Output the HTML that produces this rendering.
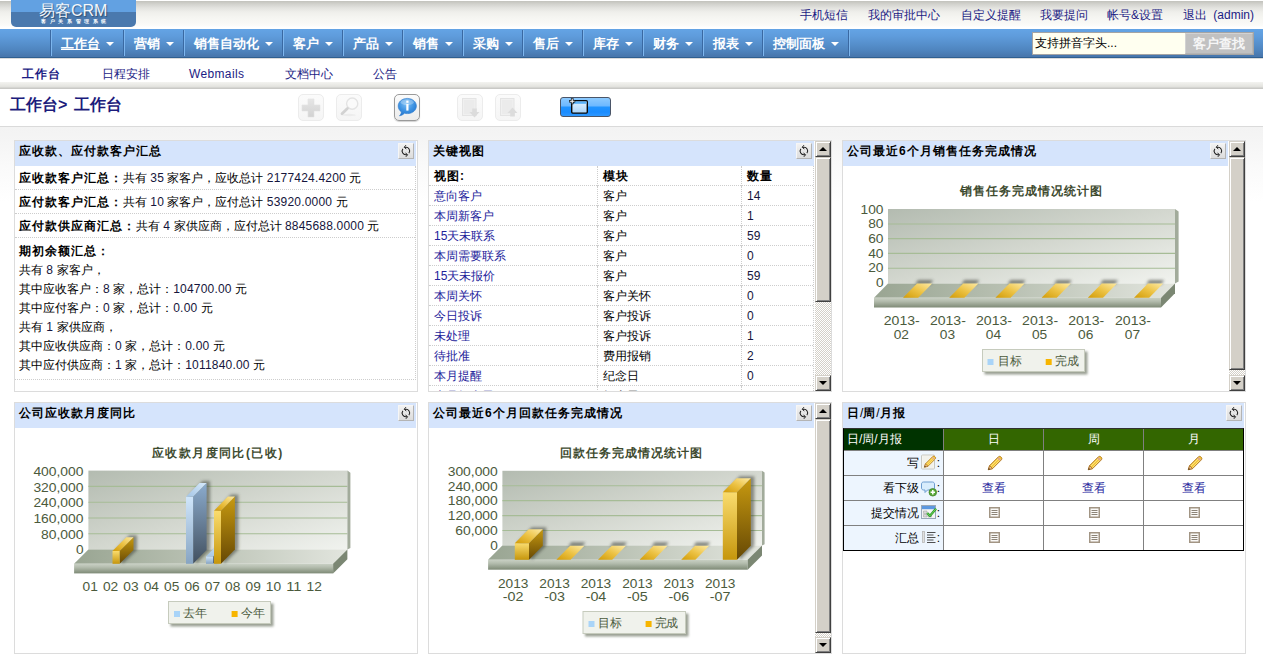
<!DOCTYPE html><html><head><meta charset="utf-8"><title>易客CRM</title><style>
*{box-sizing:border-box}
html,body{margin:0;padding:0}
body{width:1263px;height:658px;overflow:hidden;background:#fff;font-family:"Liberation Sans",sans-serif;font-size:12px;color:#000;position:relative;line-height:14px}
.abs{position:absolute}
b,.b{font-weight:bold;letter-spacing:1px}
.c{display:inline-block;width:1em;text-align:center;font-style:normal;letter-spacing:0;text-decoration:inherit;white-space:nowrap;overflow:visible}
b .c,.b .c{width:calc(1em + 1px);text-align:left}
.nb .c{width:1em;text-align:center}
#logo .t2 .c{width:8.6px}
#topbar{left:0;top:0;width:1263px;height:29px;background:linear-gradient(to bottom,#ffffff 0px,#ffffff 1px,#c2c2bc 1px,#d2d2cd 4px,#e3e3df 8px,#efefeb 12px,#f5f5f1 17px,#f9f9f6 23px,#fcfcfa 26px,#ffffff 27px,#ffffff 29px)}
#logo{left:11px;top:0;width:125px;height:27px;border-radius:0 0 5px 5px;background:linear-gradient(to bottom,#62a1e2 0,#62a1e2 12px,#4a79ae 12px,#4a79ae 27px);overflow:hidden}
#logo .t1{position:absolute;left:28px;top:1px;color:rgba(255,255,255,.94);font-size:16px;line-height:19px;letter-spacing:0px;white-space:nowrap;text-shadow:1px 1px 1px rgba(0,0,0,.35)}
#logo .t2{position:absolute;left:28.5px;top:17.5px;color:#fff;font-size:5px;line-height:6px;letter-spacing:3.7px;white-space:nowrap;font-weight:bold}
.tl{position:absolute;top:8px;color:#1c1c84;white-space:nowrap;line-height:14px}
#nav{left:0;top:29px;width:1263px;height:30px;background:linear-gradient(to bottom,#64a4e5 0,#5f9cdc 7px,#5791ce 14px,#4f85bf 21px,#4877ad 27px,#4877ad 28px,#2f5f90 28px,#2f5f90 29px,#cdcdcd 29px,#e8e8e8 30px)}
.sep{position:absolute;top:1px;width:2px;height:26px;border-left:1px solid #3a69a2;border-right:1px solid #7db6ee}
.ni{position:absolute;top:0;height:28px;line-height:30px;color:#fff;font-weight:bold;font-size:13px;white-space:nowrap}
.arr{position:absolute;top:13px;width:0;height:0;border-left:4px solid transparent;border-right:4px solid transparent;border-top:4.5px solid #fff}
#srch{left:1032px;top:32px;width:222px;height:23px;border:1px solid #a4a4a4;background:#fffff0}
#srch .in{position:absolute;left:0;top:0;width:152px;height:21px;background:#fffff0;padding:0 0 0 2px;line-height:21px;color:#000;white-space:nowrap}
#sbtn{position:absolute;left:152px;top:0;width:68px;height:21px;background:#c1c1c1;border:1px solid #d2d2d2;border-right-color:#b4b4b4;border-bottom-color:#b4b4b4;color:#f6f6f6;font-weight:bold;font-size:13px;line-height:19px;text-align:center;letter-spacing:0px}
.sn{position:absolute;top:67px;color:#1c1c84;white-space:nowrap;line-height:14px}
#band{left:0;top:82px;width:1263px;height:7px;background:linear-gradient(to bottom,#f3f3f0 0,#e9e9e5 3px,#e1e1dd 5px,#c9c9c6 6px,#c9c9c6 7px)}
#crumb{left:10px;top:95px;font-size:16px;line-height:20px;color:#1c1c7c;white-space:nowrap;font-weight:bold;letter-spacing:0;word-spacing:2.5px}
#line{left:0;top:126px;width:1263px;height:1px;background:#dadada}
#bg{left:0;top:127px;width:1263px;height:531px;background:linear-gradient(to bottom,#f3f3f3 0,#f5f5f5 14px,#fafafa 40px,#ffffff 75px)}
.panel{position:absolute;width:404px;height:252px;border:1px solid #dcdcdc;background:#fff;overflow:hidden}
.ph{position:absolute;left:0;top:0;height:25px;background:#d5e4fc}
.pt{position:absolute;left:4px;top:3px;white-space:nowrap;line-height:14px}
.rf{position:absolute;top:2px;width:16px;height:16px;background:linear-gradient(to bottom,#f2f2f2,#dcdcdc);border:1px solid;border-color:#f6f6f6 #b4b4b4 #b4b4b4 #f6f6f6}
.sb{position:absolute;top:0;width:16px;height:250px;background:#ebe9e4;background-image:linear-gradient(45deg,#d4d0c8 25%,transparent 25%,transparent 75%,#d4d0c8 75%),linear-gradient(45deg,#d4d0c8 25%,#fff 25%,#fff 75%,#d4d0c8 75%);background-size:2px 2px;background-position:0 0,1px 1px}
.sbb{position:absolute;left:0;width:16px;background:#d4d0c8;border:1px solid;border-color:#d4d0c8 #404040 #404040 #d4d0c8;box-shadow:inset 1px 1px 0 #fff,inset -1px -1px 0 #808080}
.tri-u{position:absolute;left:2.5px;top:5px;width:0;height:0;border-left:4px solid transparent;border-right:4px solid transparent;border-bottom:4px solid #000}
.tri-d{position:absolute;left:2.5px;top:6px;width:0;height:0;border-left:4px solid transparent;border-right:4px solid transparent;border-top:4px solid #000}
.num{color:#15153c;letter-spacing:0.2px}
a,.lk{color:#22229a;text-decoration:none}
</style></head><body><div id="topbar" class="abs"></div><div id="logo" class="abs"><div class="t1"><i class="c">易</i><i class="c">客</i>CRM</div><div class="t2"><i class="c">客</i><i class="c">户</i><i class="c">关</i><i class="c">系</i><i class="c">管</i><i class="c">理</i><i class="c">系</i><i class="c">统</i></div></div><div class="tl" style="left:800px"><i class="c">手</i><i class="c">机</i><i class="c">短</i><i class="c">信</i></div><div class="tl" style="left:867.5px"><i class="c">我</i><i class="c">的</i><i class="c">审</i><i class="c">批</i><i class="c">中</i><i class="c">心</i></div><div class="tl" style="left:960.5px"><i class="c">自</i><i class="c">定</i><i class="c">义</i><i class="c">提</i><i class="c">醒</i></div><div class="tl" style="left:1040px"><i class="c">我</i><i class="c">要</i><i class="c">提</i><i class="c">问</i></div><div class="tl" style="left:1107px"><i class="c">帐</i><i class="c">号</i>&amp;<i class="c">设</i><i class="c">置</i></div><div class="tl" style="left:1183px"><i class="c">退</i><i class="c">出</i><span style="margin-left:3px"> </span>(admin)</div><div id="nav" class="abs"><div class="sep" style="left:50px"></div><div class="ni" style="left:61px;text-decoration:underline;"><i class="c">工</i><i class="c">作</i><i class="c">台</i></div><div class="arr" style="left:105.5px"></div><div class="sep" style="left:123px"></div><div class="ni" style="left:134px;"><i class="c">营</i><i class="c">销</i></div><div class="arr" style="left:165.5px"></div><div class="sep" style="left:183px"></div><div class="ni" style="left:194px;"><i class="c">销</i><i class="c">售</i><i class="c">自</i><i class="c">动</i><i class="c">化</i></div><div class="arr" style="left:264.5px"></div><div class="sep" style="left:282px"></div><div class="ni" style="left:293px;"><i class="c">客</i><i class="c">户</i></div><div class="arr" style="left:324.5px"></div><div class="sep" style="left:342px"></div><div class="ni" style="left:353px;"><i class="c">产</i><i class="c">品</i></div><div class="arr" style="left:384.5px"></div><div class="sep" style="left:402px"></div><div class="ni" style="left:413px;"><i class="c">销</i><i class="c">售</i></div><div class="arr" style="left:444.5px"></div><div class="sep" style="left:462px"></div><div class="ni" style="left:473px;"><i class="c">采</i><i class="c">购</i></div><div class="arr" style="left:504.5px"></div><div class="sep" style="left:522px"></div><div class="ni" style="left:533px;"><i class="c">售</i><i class="c">后</i></div><div class="arr" style="left:564.5px"></div><div class="sep" style="left:582px"></div><div class="ni" style="left:593px;"><i class="c">库</i><i class="c">存</i></div><div class="arr" style="left:624.5px"></div><div class="sep" style="left:642px"></div><div class="ni" style="left:653px;"><i class="c">财</i><i class="c">务</i></div><div class="arr" style="left:684.5px"></div><div class="sep" style="left:702px"></div><div class="ni" style="left:713px;"><i class="c">报</i><i class="c">表</i></div><div class="arr" style="left:744.5px"></div><div class="sep" style="left:762px"></div><div class="ni" style="left:773px;"><i class="c">控</i><i class="c">制</i><i class="c">面</i><i class="c">板</i></div><div class="arr" style="left:830.5px"></div><div class="sep" style="left:848px"></div></div><div id="srch" class="abs"><div class="in"><i class="c">支</i><i class="c">持</i><i class="c">拼</i><i class="c">音</i><i class="c">字</i><i class="c">头</i>...</div><div id="sbtn"><i class="c">客</i><i class="c">户</i><i class="c">查</i><i class="c">找</i></div></div><div class="sn b" style="left:22px"><i class="c">工</i><i class="c">作</i><i class="c">台</i></div><div class="sn" style="left:101.5px"><i class="c">日</i><i class="c">程</i><i class="c">安</i><i class="c">排</i></div><div class="sn" style="left:189px"><span style="letter-spacing:0.35px">Webmails</span></div><div class="sn" style="left:284.5px"><i class="c">文</i><i class="c">档</i><i class="c">中</i><i class="c">心</i></div><div class="sn" style="left:372.5px"><i class="c">公</i><i class="c">告</i></div><div id="band" class="abs"></div><div id="crumb" class="abs"><i class="c">工</i><i class="c">作</i><i class="c">台</i>&gt; <i class="c">工</i><i class="c">作</i><i class="c">台</i></div><div class="abs" style="left:298px;top:94px;width:26px;height:27px;border:1px solid #ececec;border-radius:5px;background:linear-gradient(to bottom,#fbfbfb,#f5f5f5)"></div><svg class="abs" style="left:298px;top:94px" width="26" height="27" viewBox="0 0 26 27"><defs><linearGradient id="gpl" x1="0" y1="0" x2="0" y2="1"><stop offset="0" stop-color="#e6e6e6"/><stop offset="1" stop-color="#d2d2d2"/></linearGradient></defs><path d="M10 5 h6 v6 h6 v6 h-6 v6 h-6 v-6 h-6 v-6 h6 z" fill="url(#gpl)" stroke="#e2e2e2" stroke-width="0.6" stroke-linejoin="round"/></svg><div class="abs" style="left:336px;top:94px;width:26px;height:27px;border:1px solid #ececec;border-radius:5px;background:linear-gradient(to bottom,#fbfbfb,#f5f5f5)"></div><svg class="abs" style="left:336px;top:94px" width="26" height="27" viewBox="0 0 26 27"><ellipse cx="13" cy="21" rx="7" ry="1.2" fill="#ececec"/><circle cx="16.2" cy="9.6" r="5.6" fill="#fafafa" stroke="#e3e3e3" stroke-width="1.4"/><path d="M11.4 14.4 L6 19.8" stroke="#d2d2d2" stroke-width="2.8" stroke-linecap="round"/></svg><div class="abs" style="left:394px;top:94px;width:26px;height:27px;border:1px solid #9a9a9a;border-radius:5px;background:linear-gradient(to bottom,#fbfbfb,#ececec);box-shadow:0 1px 1px rgba(0,0,0,.18)"></div><svg class="abs" style="left:394px;top:94px" width="26" height="27" viewBox="0 0 26 27"><defs><radialGradient id="gbb" cx="0.45" cy="0.3" r="0.8"><stop offset="0" stop-color="#7cc0f6"/><stop offset="0.55" stop-color="#3a8fe0"/><stop offset="1" stop-color="#1f6fc8"/></radialGradient></defs><path d="M13.3 4.4 C18.6 4.4 22.4 7.8 22.4 12 C22.4 16.4 18.4 19.6 13.4 19.6 C12.3 19.6 11.3 19.5 10.4 19.2 C9.2 20.6 7.4 21.6 5.4 21.8 C6.6 20.8 7.3 19.4 7.4 18 C5.4 16.6 4.2 14.4 4.2 12 C4.2 7.8 8 4.4 13.3 4.4 Z" fill="url(#gbb)" stroke="#2a78cc" stroke-width="0.6"/><ellipse cx="13.2" cy="8.2" rx="6.5" ry="3" fill="#fff" opacity="0.28"/><rect x="12.3" y="10" width="2.2" height="6.6" fill="#fff"/><rect x="12.3" y="6.6" width="2.2" height="2.2" fill="#fff"/></svg><div class="abs" style="left:457px;top:94px;width:26px;height:27px;border:1px solid #ececec;border-radius:5px;background:linear-gradient(to bottom,#fbfbfb,#f5f5f5)"></div><svg class="abs" style="left:457px;top:94px" width="26" height="27" viewBox="0 0 26 27"><rect x="5.5" y="4.5" width="13.5" height="17" fill="#f0f0f0" stroke="#e4e4e4" stroke-width="1"/><rect x="7" y="6" width="10.5" height="14" fill="#ebebeb"/><path d="M15.2 14.5 H19.8 V18 H22.5 L17.5 23.5 L12.5 18 H15.2 Z" fill="#dcdcdc"/></svg><div class="abs" style="left:495px;top:94px;width:26px;height:27px;border:1px solid #ececec;border-radius:5px;background:linear-gradient(to bottom,#fbfbfb,#f5f5f5)"></div><svg class="abs" style="left:495px;top:94px" width="26" height="27" viewBox="0 0 26 27"><rect x="5.5" y="4.5" width="13.5" height="17" fill="#f0f0f0" stroke="#e4e4e4" stroke-width="1"/><rect x="7" y="6" width="10.5" height="14" fill="#ebebeb"/><path d="M17.5 13.5 L22.5 19 H19.8 V22.5 H15.2 V19 H12.5 Z" fill="#dcdcdc"/></svg><div class="abs" style="left:560px;top:97px;width:51px;height:20px;border:1px solid #4a5568;border-radius:3px;background:linear-gradient(to bottom,#8ccaff 0,#6cb8ff 8px,#2094ff 9px,#1a8cff 14px,#2e98ff 18px)"></div><svg class="abs" style="left:566px;top:97px" width="26" height="20" viewBox="0 0 26 20"><defs><linearGradient id="gwn" x1="0" y1="0" x2="0" y2="1"><stop offset="0" stop-color="#e8f4ff"/><stop offset="1" stop-color="#a8d4fa"/></linearGradient></defs><rect x="5.7" y="3.7" width="15.6" height="12.4" rx="1" fill="url(#gwn)" stroke="#0a0a0a" stroke-width="1.4"/><rect x="6.4" y="4.4" width="14.2" height="2.4" fill="#58b0f8"/><path d="M6.2 1.2 V7.2 M3.2 4.2 H9.2" stroke="#000" stroke-width="2.6"/><path d="M6.2 1.8 V6.6 M3.8 4.2 H8.6" stroke="#fff" stroke-width="1.1"/></svg><div id="line" class="abs"></div><div id="bg" class="abs"></div><div class="panel" style="left:14px;top:140px"><div class="ph" style="width:401px"><div class="pt b"><i class="c">应</i><i class="c">收</i><i class="c">款</i><i class="c">、</i><i class="c">应</i><i class="c">付</i><i class="c">款</i><i class="c">客</i><i class="c">户</i><i class="c">汇</i><i class="c">总</i></div><div class="rf" style="left:383px"><svg width="14" height="14" viewBox="0 0 14 14" style="position:absolute;left:0;top:0"><path d="M9.9 9.2 A3.7 3.6 0 0 0 6.0 3.5" fill="none" stroke="#1c1c1c" stroke-width="1.05"/><path d="M3.9 4.8 A3.7 3.6 0 0 0 7.8 10.5" fill="none" stroke="#1c1c1c" stroke-width="1.05"/><path d="M6.9 1.2 L5.2 3.3 L7.3 4.9" fill="none" stroke="#1c1c1c" stroke-width="1.0"/><path d="M6.9 12.8 L8.6 10.7 L6.5 9.1" fill="none" stroke="#1c1c1c" stroke-width="1.0"/></svg></div></div><div style="position:absolute;left:0;top:25px;width:401px;height:214px;border-right:1px dotted #cdcdcd;border-bottom:1px dotted #cdcdcd"><div style="height:24px;border-bottom:1px dotted #cdcdcd;padding:5px 0 0 4px;white-space:nowrap;line-height:14px"><b><i class="c">应</i><i class="c">收</i><i class="c">款</i><i class="c">客</i><i class="c">户</i><i class="c">汇</i><i class="c">总</i><i class="c">：</i></b><i class="c">共</i><i class="c">有</i> <span class="num">35</span> <i class="c">家</i><i class="c">客</i><i class="c">户</i><i class="c">，</i><i class="c">应</i><i class="c">收</i><i class="c">总</i><i class="c">计</i> <span class="num">2177424.4200</span> <i class="c">元</i></div><div style="height:24px;border-bottom:1px dotted #cdcdcd;padding:5px 0 0 4px;white-space:nowrap;line-height:14px"><b><i class="c">应</i><i class="c">付</i><i class="c">款</i><i class="c">客</i><i class="c">户</i><i class="c">汇</i><i class="c">总</i><i class="c">：</i></b><i class="c">共</i><i class="c">有</i> <span class="num">10</span> <i class="c">家</i><i class="c">客</i><i class="c">户</i><i class="c">，</i><i class="c">应</i><i class="c">付</i><i class="c">总</i><i class="c">计</i> <span class="num">53920.0000</span> <i class="c">元</i></div><div style="height:24px;border-bottom:1px dotted #cdcdcd;padding:5px 0 0 4px;white-space:nowrap;line-height:14px"><b><i class="c">应</i><i class="c">付</i><i class="c">款</i><i class="c">供</i><i class="c">应</i><i class="c">商</i><i class="c">汇</i><i class="c">总</i><i class="c">：</i></b><i class="c">共</i><i class="c">有</i> <span class="num">4</span> <i class="c">家</i><i class="c">供</i><i class="c">应</i><i class="c">商</i><i class="c">，</i><i class="c">应</i><i class="c">付</i><i class="c">总</i><i class="c">计</i> <span class="num">8845688.0000</span> <i class="c">元</i></div><div style="padding:4px 0 0 4px;line-height:19px;white-space:nowrap"><b><i class="c">期</i><i class="c">初</i><i class="c">余</i><i class="c">额</i><i class="c">汇</i><i class="c">总</i><i class="c">：</i></b><br><i class="c">共</i><i class="c">有</i> <span class="num">8</span> <i class="c">家</i><i class="c">客</i><i class="c">户</i><i class="c">，</i><br><i class="c">其</i><i class="c">中</i><i class="c">应</i><i class="c">收</i><i class="c">客</i><i class="c">户</i><i class="c">：</i><span class="num">8</span> <i class="c">家</i><i class="c">，</i><i class="c">总</i><i class="c">计</i><i class="c">：</i><span class="num">104700.00</span> <i class="c">元</i><br><i class="c">其</i><i class="c">中</i><i class="c">应</i><i class="c">付</i><i class="c">客</i><i class="c">户</i><i class="c">：</i><span class="num">0</span> <i class="c">家</i><i class="c">，</i><i class="c">总</i><i class="c">计</i><i class="c">：</i><span class="num">0.00</span> <i class="c">元</i><br><i class="c">共</i><i class="c">有</i> <span class="num">1</span> <i class="c">家</i><i class="c">供</i><i class="c">应</i><i class="c">商</i><i class="c">，</i><br><i class="c">其</i><i class="c">中</i><i class="c">应</i><i class="c">收</i><i class="c">供</i><i class="c">应</i><i class="c">商</i><i class="c">：</i><span class="num">0</span> <i class="c">家</i><i class="c">，</i><i class="c">总</i><i class="c">计</i><i class="c">：</i><span class="num">0.00</span> <i class="c">元</i><br><i class="c">其</i><i class="c">中</i><i class="c">应</i><i class="c">付</i><i class="c">供</i><i class="c">应</i><i class="c">商</i><i class="c">：</i><span class="num">1</span> <i class="c">家</i><i class="c">，</i><i class="c">总</i><i class="c">计</i><i class="c">：</i><span class="num">1011840.00</span> <i class="c">元</i></div></div></div><div class="panel" style="left:428px;top:140px"><div class="ph" style="width:385px"><div class="pt b"><i class="c">关</i><i class="c">键</i><i class="c">视</i><i class="c">图</i></div><div class="rf" style="left:367px"><svg width="14" height="14" viewBox="0 0 14 14" style="position:absolute;left:0;top:0"><path d="M9.9 9.2 A3.7 3.6 0 0 0 6.0 3.5" fill="none" stroke="#1c1c1c" stroke-width="1.05"/><path d="M3.9 4.8 A3.7 3.6 0 0 0 7.8 10.5" fill="none" stroke="#1c1c1c" stroke-width="1.05"/><path d="M6.9 1.2 L5.2 3.3 L7.3 4.9" fill="none" stroke="#1c1c1c" stroke-width="1.0"/><path d="M6.9 12.8 L8.6 10.7 L6.5 9.1" fill="none" stroke="#1c1c1c" stroke-width="1.0"/></svg></div></div><div style="position:absolute;left:0;top:25px;width:385px;height:225px;overflow:hidden;border-right:1px dotted #cdcdcd"><div class="b" style="height:20px;border-bottom:1px dotted #cdcdcd;position:relative;white-space:nowrap;line-height:14px;"><div style="position:absolute;left:5px;top:3px" ><i class="c">视</i><i class="c">图</i>:</div><div style="position:absolute;left:168px;top:0;height:20px;border-left:1px dotted #cdcdcd;padding:3px 0 0 5px"><i class="c">模</i><i class="c">块</i></div><div style="position:absolute;left:312px;top:0;height:20px;border-left:1px dotted #cdcdcd;padding:3px 0 0 5px" ><i class="c">数</i><i class="c">量</i></div></div><div style="height:20px;border-bottom:1px dotted #cdcdcd;position:relative;white-space:nowrap;line-height:14px;"><div style="position:absolute;left:5px;top:3px" class="lk"><i class="c">意</i><i class="c">向</i><i class="c">客</i><i class="c">户</i></div><div style="position:absolute;left:168px;top:0;height:20px;border-left:1px dotted #cdcdcd;padding:3px 0 0 5px"><i class="c">客</i><i class="c">户</i></div><div style="position:absolute;left:312px;top:0;height:20px;border-left:1px dotted #cdcdcd;padding:3px 0 0 5px" class="num">14</div></div><div style="height:20px;border-bottom:1px dotted #cdcdcd;position:relative;white-space:nowrap;line-height:14px;"><div style="position:absolute;left:5px;top:3px" class="lk"><i class="c">本</i><i class="c">周</i><i class="c">新</i><i class="c">客</i><i class="c">户</i></div><div style="position:absolute;left:168px;top:0;height:20px;border-left:1px dotted #cdcdcd;padding:3px 0 0 5px"><i class="c">客</i><i class="c">户</i></div><div style="position:absolute;left:312px;top:0;height:20px;border-left:1px dotted #cdcdcd;padding:3px 0 0 5px" class="num">1</div></div><div style="height:20px;border-bottom:1px dotted #cdcdcd;position:relative;white-space:nowrap;line-height:14px;"><div style="position:absolute;left:5px;top:3px" class="lk">15<i class="c">天</i><i class="c">未</i><i class="c">联</i><i class="c">系</i></div><div style="position:absolute;left:168px;top:0;height:20px;border-left:1px dotted #cdcdcd;padding:3px 0 0 5px"><i class="c">客</i><i class="c">户</i></div><div style="position:absolute;left:312px;top:0;height:20px;border-left:1px dotted #cdcdcd;padding:3px 0 0 5px" class="num">59</div></div><div style="height:20px;border-bottom:1px dotted #cdcdcd;position:relative;white-space:nowrap;line-height:14px;"><div style="position:absolute;left:5px;top:3px" class="lk"><i class="c">本</i><i class="c">周</i><i class="c">需</i><i class="c">要</i><i class="c">联</i><i class="c">系</i></div><div style="position:absolute;left:168px;top:0;height:20px;border-left:1px dotted #cdcdcd;padding:3px 0 0 5px"><i class="c">客</i><i class="c">户</i></div><div style="position:absolute;left:312px;top:0;height:20px;border-left:1px dotted #cdcdcd;padding:3px 0 0 5px" class="num">0</div></div><div style="height:20px;border-bottom:1px dotted #cdcdcd;position:relative;white-space:nowrap;line-height:14px;"><div style="position:absolute;left:5px;top:3px" class="lk">15<i class="c">天</i><i class="c">未</i><i class="c">报</i><i class="c">价</i></div><div style="position:absolute;left:168px;top:0;height:20px;border-left:1px dotted #cdcdcd;padding:3px 0 0 5px"><i class="c">客</i><i class="c">户</i></div><div style="position:absolute;left:312px;top:0;height:20px;border-left:1px dotted #cdcdcd;padding:3px 0 0 5px" class="num">59</div></div><div style="height:20px;border-bottom:1px dotted #cdcdcd;position:relative;white-space:nowrap;line-height:14px;"><div style="position:absolute;left:5px;top:3px" class="lk"><i class="c">本</i><i class="c">周</i><i class="c">关</i><i class="c">怀</i></div><div style="position:absolute;left:168px;top:0;height:20px;border-left:1px dotted #cdcdcd;padding:3px 0 0 5px"><i class="c">客</i><i class="c">户</i><i class="c">关</i><i class="c">怀</i></div><div style="position:absolute;left:312px;top:0;height:20px;border-left:1px dotted #cdcdcd;padding:3px 0 0 5px" class="num">0</div></div><div style="height:20px;border-bottom:1px dotted #cdcdcd;position:relative;white-space:nowrap;line-height:14px;"><div style="position:absolute;left:5px;top:3px" class="lk"><i class="c">今</i><i class="c">日</i><i class="c">投</i><i class="c">诉</i></div><div style="position:absolute;left:168px;top:0;height:20px;border-left:1px dotted #cdcdcd;padding:3px 0 0 5px"><i class="c">客</i><i class="c">户</i><i class="c">投</i><i class="c">诉</i></div><div style="position:absolute;left:312px;top:0;height:20px;border-left:1px dotted #cdcdcd;padding:3px 0 0 5px" class="num">0</div></div><div style="height:20px;border-bottom:1px dotted #cdcdcd;position:relative;white-space:nowrap;line-height:14px;"><div style="position:absolute;left:5px;top:3px" class="lk"><i class="c">未</i><i class="c">处</i><i class="c">理</i></div><div style="position:absolute;left:168px;top:0;height:20px;border-left:1px dotted #cdcdcd;padding:3px 0 0 5px"><i class="c">客</i><i class="c">户</i><i class="c">投</i><i class="c">诉</i></div><div style="position:absolute;left:312px;top:0;height:20px;border-left:1px dotted #cdcdcd;padding:3px 0 0 5px" class="num">1</div></div><div style="height:20px;border-bottom:1px dotted #cdcdcd;position:relative;white-space:nowrap;line-height:14px;"><div style="position:absolute;left:5px;top:3px" class="lk"><i class="c">待</i><i class="c">批</i><i class="c">准</i></div><div style="position:absolute;left:168px;top:0;height:20px;border-left:1px dotted #cdcdcd;padding:3px 0 0 5px"><i class="c">费</i><i class="c">用</i><i class="c">报</i><i class="c">销</i></div><div style="position:absolute;left:312px;top:0;height:20px;border-left:1px dotted #cdcdcd;padding:3px 0 0 5px" class="num">2</div></div><div style="height:20px;border-bottom:1px dotted #cdcdcd;position:relative;white-space:nowrap;line-height:14px;"><div style="position:absolute;left:5px;top:3px" class="lk"><i class="c">本</i><i class="c">月</i><i class="c">提</i><i class="c">醒</i></div><div style="position:absolute;left:168px;top:0;height:20px;border-left:1px dotted #cdcdcd;padding:3px 0 0 5px"><i class="c">纪</i><i class="c">念</i><i class="c">日</i></div><div style="position:absolute;left:312px;top:0;height:20px;border-left:1px dotted #cdcdcd;padding:3px 0 0 5px" class="num">0</div></div><div style="height:20px;border-bottom:1px dotted #cdcdcd;position:relative;white-space:nowrap;line-height:14px;"><div style="position:absolute;left:5px;top:3px" class="lk"><i class="c">本</i><i class="c">月</i><i class="c">纪</i><i class="c">念</i><i class="c">日</i></div><div style="position:absolute;left:168px;top:0;height:20px;border-left:1px dotted #cdcdcd;padding:3px 0 0 5px"><i class="c">纪</i><i class="c">念</i><i class="c">日</i></div><div style="position:absolute;left:312px;top:0;height:20px;border-left:1px dotted #cdcdcd;padding:3px 0 0 5px" class="num">0</div></div></div><div class="sb" style="left:386px"><div class="sbb" style="top:0;height:16px"><div class="tri-u"></div></div><div class="sbb" style="top:16px;height:145px"></div><div class="sbb" style="top:234px;height:16px"><div class="tri-d" style="top:5px"></div></div></div></div><div class="panel" style="left:842px;top:140px"><div class="ph" style="width:385px"><div class="pt b"><i class="c">公</i><i class="c">司</i><i class="c">最</i><i class="c">近</i>6<i class="c">个</i><i class="c">月</i><i class="c">销</i><i class="c">售</i><i class="c">任</i><i class="c">务</i><i class="c">完</i><i class="c">成</i><i class="c">情</i><i class="c">况</i></div><div class="rf" style="left:367px"><svg width="14" height="14" viewBox="0 0 14 14" style="position:absolute;left:0;top:0"><path d="M9.9 9.2 A3.7 3.6 0 0 0 6.0 3.5" fill="none" stroke="#1c1c1c" stroke-width="1.05"/><path d="M3.9 4.8 A3.7 3.6 0 0 0 7.8 10.5" fill="none" stroke="#1c1c1c" stroke-width="1.05"/><path d="M6.9 1.2 L5.2 3.3 L7.3 4.9" fill="none" stroke="#1c1c1c" stroke-width="1.0"/><path d="M6.9 12.8 L8.6 10.7 L6.5 9.1" fill="none" stroke="#1c1c1c" stroke-width="1.0"/></svg></div></div><svg class="abs" style="left:0;top:25px" width="386" height="225" viewBox="843 166 386 225"><defs>
<linearGradient id="c1wall" x1="0" y1="0" x2="1" y2="1"><stop offset="0" stop-color="#b3bbb0"/><stop offset="0.5" stop-color="#d3d7cf"/><stop offset="1" stop-color="#f1f3ef"/></linearGradient>
<linearGradient id="c1flr" x1="0" y1="0" x2="1" y2="0"><stop offset="0" stop-color="#99a592"/><stop offset="0.45" stop-color="#b9c1b3"/><stop offset="1" stop-color="#e2e5de"/></linearGradient>
<linearGradient id="c1flf" x1="0" y1="0" x2="0" y2="1"><stop offset="0" stop-color="#c9d0c4"/><stop offset="0.35" stop-color="#b4bdae"/><stop offset="1" stop-color="#7e8a76"/></linearGradient>
<linearGradient id="c1gf" x1="0" y1="0" x2="0" y2="1"><stop offset="0" stop-color="#fadc6e"/><stop offset="1" stop-color="#c6960c"/></linearGradient>
<linearGradient id="c1gs" x1="0" y1="0" x2="0" y2="1"><stop offset="0" stop-color="#c89a10"/><stop offset="1" stop-color="#664804"/></linearGradient>
<linearGradient id="c1gt" x1="0" y1="1" x2="1" y2="0"><stop offset="0" stop-color="#d29c08"/><stop offset="0.5" stop-color="#ecc244"/><stop offset="1" stop-color="#fdeaa4"/></linearGradient>
<linearGradient id="c1bf" x1="0" y1="0" x2="0" y2="1"><stop offset="0" stop-color="#d0e6fb"/><stop offset="1" stop-color="#86a4c2"/></linearGradient>
<linearGradient id="c1bs" x1="0" y1="0" x2="0" y2="1"><stop offset="0" stop-color="#8cacce"/><stop offset="1" stop-color="#42505f"/></linearGradient>
<linearGradient id="c1bt" x1="0" y1="1" x2="1" y2="0"><stop offset="0" stop-color="#a4c4e4"/><stop offset="1" stop-color="#d6eafc"/></linearGradient>
<filter id="c1blur" x="-50%" y="-50%" width="200%" height="200%"><feGaussianBlur stdDeviation="1.6"/></filter>
<filter id="c1blur2" x="-50%" y="-50%" width="200%" height="200%"><feGaussianBlur stdDeviation="1.2"/></filter>
</defs><text x="1030.5" y="195" text-anchor="middle" font-family="Liberation Sans, sans-serif" font-size="12" font-weight="bold" fill="#3e4b30" textLength="142">销售任务完成情况统计图</text><rect x="888" y="209" width="287" height="74.39999999999998" fill="url(#c1wall)"/><path d="M888 224 H1175" stroke="#a6bc96" stroke-width="1.1"/><path d="M888 238.6 H1175" stroke="#a6bc96" stroke-width="1.1"/><path d="M888 253.4 H1175" stroke="#a6bc96" stroke-width="1.1"/><path d="M888 268.3 H1175" stroke="#a6bc96" stroke-width="1.1"/><polygon points="1175,209 1178.6,211.52 1178.6,281.59999999999997 1175,283.4" fill="#a2ab9b"/><polygon points="888,283.4 1175,283.4 1161,297.7 874,297.7" fill="url(#c1flr)"/><rect x="874" y="297.7" width="287" height="9.8" fill="url(#c1flf)"/><polygon points="1161,297.7 1175,283.4 1175,293.2 1161,307.5" fill="#7b8773"/><text x="883.5" y="214.0" text-anchor="end" font-family="Liberation Sans, sans-serif" font-size="12.6" fill="#4b5a3c" textLength="22.9" lengthAdjust="spacingAndGlyphs">100</text><text x="883.5" y="228.2" text-anchor="end" font-family="Liberation Sans, sans-serif" font-size="12.6" fill="#4b5a3c" textLength="15.3" lengthAdjust="spacingAndGlyphs">80</text><text x="883.5" y="242.6" text-anchor="end" font-family="Liberation Sans, sans-serif" font-size="12.6" fill="#4b5a3c" textLength="15.3" lengthAdjust="spacingAndGlyphs">60</text><text x="883.5" y="257.6" text-anchor="end" font-family="Liberation Sans, sans-serif" font-size="12.6" fill="#4b5a3c" textLength="15.3" lengthAdjust="spacingAndGlyphs">40</text><text x="883.5" y="272.4" text-anchor="end" font-family="Liberation Sans, sans-serif" font-size="12.6" fill="#4b5a3c" textLength="15.3" lengthAdjust="spacingAndGlyphs">20</text><text x="883.5" y="287.2" text-anchor="end" font-family="Liberation Sans, sans-serif" font-size="12.6" fill="#4b5a3c" textLength="7.6" lengthAdjust="spacingAndGlyphs">0</text><polygon points="918.0,279.9 933.2,279.9 930.2,284.4 915.0,284.4" fill="#30362c" opacity="0.55" filter="url(#c1blur)"/><polygon points="903.0,297.7 918.2,297.7 932.2,283.4 917.0,283.4" fill="url(#c1gt)"/><polygon points="964.2,279.9 979.4000000000001,279.9 976.4000000000001,284.4 961.2,284.4" fill="#30362c" opacity="0.55" filter="url(#c1blur)"/><polygon points="949.2,297.7 964.4000000000001,297.7 978.4000000000001,283.4 963.2,283.4" fill="url(#c1gt)"/><polygon points="1010.4,279.9 1025.6,279.9 1022.5999999999999,284.4 1007.4,284.4" fill="#30362c" opacity="0.55" filter="url(#c1blur)"/><polygon points="995.4,297.7 1010.6,297.7 1024.6,283.4 1009.4,283.4" fill="url(#c1gt)"/><polygon points="1056.6,279.9 1071.8,279.9 1068.8,284.4 1053.6,284.4" fill="#30362c" opacity="0.55" filter="url(#c1blur)"/><polygon points="1041.6,297.7 1056.8,297.7 1070.8,283.4 1055.6,283.4" fill="url(#c1gt)"/><polygon points="1102.8,279.9 1118.0,279.9 1115.0,284.4 1099.8,284.4" fill="#30362c" opacity="0.55" filter="url(#c1blur)"/><polygon points="1087.8,297.7 1103.0,297.7 1117.0,283.4 1101.8,283.4" fill="url(#c1gt)"/><polygon points="1149.0,279.9 1164.2,279.9 1161.2,284.4 1146.0,284.4" fill="#30362c" opacity="0.55" filter="url(#c1blur)"/><polygon points="1134.0,297.7 1149.2,297.7 1163.2,283.4 1148.0,283.4" fill="url(#c1gt)"/><text x="901.8" y="325.2" text-anchor="middle" font-family="Liberation Sans, sans-serif" font-size="12.6" fill="#4b5a3c" textLength="36.0" lengthAdjust="spacingAndGlyphs">2013-</text><text x="901.3" y="338.9" text-anchor="middle" font-family="Liberation Sans, sans-serif" font-size="12.6" fill="#4b5a3c" textLength="15.3" lengthAdjust="spacingAndGlyphs">02</text><text x="947.9" y="325.2" text-anchor="middle" font-family="Liberation Sans, sans-serif" font-size="12.6" fill="#4b5a3c" textLength="36.0" lengthAdjust="spacingAndGlyphs">2013-</text><text x="947.4" y="338.9" text-anchor="middle" font-family="Liberation Sans, sans-serif" font-size="12.6" fill="#4b5a3c" textLength="15.3" lengthAdjust="spacingAndGlyphs">03</text><text x="994.0" y="325.2" text-anchor="middle" font-family="Liberation Sans, sans-serif" font-size="12.6" fill="#4b5a3c" textLength="36.0" lengthAdjust="spacingAndGlyphs">2013-</text><text x="993.5" y="338.9" text-anchor="middle" font-family="Liberation Sans, sans-serif" font-size="12.6" fill="#4b5a3c" textLength="15.3" lengthAdjust="spacingAndGlyphs">04</text><text x="1040.1" y="325.2" text-anchor="middle" font-family="Liberation Sans, sans-serif" font-size="12.6" fill="#4b5a3c" textLength="36.0" lengthAdjust="spacingAndGlyphs">2013-</text><text x="1039.6" y="338.9" text-anchor="middle" font-family="Liberation Sans, sans-serif" font-size="12.6" fill="#4b5a3c" textLength="15.3" lengthAdjust="spacingAndGlyphs">05</text><text x="1086.2" y="325.2" text-anchor="middle" font-family="Liberation Sans, sans-serif" font-size="12.6" fill="#4b5a3c" textLength="36.0" lengthAdjust="spacingAndGlyphs">2013-</text><text x="1085.7" y="338.9" text-anchor="middle" font-family="Liberation Sans, sans-serif" font-size="12.6" fill="#4b5a3c" textLength="15.3" lengthAdjust="spacingAndGlyphs">06</text><text x="1133" y="325.2" text-anchor="middle" font-family="Liberation Sans, sans-serif" font-size="12.6" fill="#4b5a3c" textLength="36.0" lengthAdjust="spacingAndGlyphs">2013-</text><text x="1132.5" y="338.9" text-anchor="middle" font-family="Liberation Sans, sans-serif" font-size="12.6" fill="#4b5a3c" textLength="15.3" lengthAdjust="spacingAndGlyphs">07</text><rect x="984.5" y="351.5" width="103" height="23" fill="#5a6450" opacity="0.6" filter="url(#c1blur2)"/><rect x="982.5" y="349.5" width="102" height="22" fill="#f0f2ec" stroke="#c6cbbd" stroke-width="1"/><rect x="987.5" y="359" width="6" height="6" fill="#a9d4f8"/><text x="998" y="365.2" font-family="Liberation Sans, sans-serif" font-size="12" fill="#4b5a3c" textLength="23.5">目标</text><rect x="1045.7" y="359" width="6" height="6" fill="#f7b500"/><text x="1055" y="365.2" font-family="Liberation Sans, sans-serif" font-size="12" fill="#4b5a3c" textLength="23.5">完成</text></svg><div class="sb" style="left:386px"><div class="sbb" style="top:0;height:16px"><div class="tri-u"></div></div><div class="sbb" style="top:16px;height:213px"></div><div class="sbb" style="top:234px;height:16px"><div class="tri-d" style="top:5px"></div></div></div></div><div class="panel" style="left:14px;top:402px"><div class="ph" style="width:401px"><div class="pt b"><i class="c">公</i><i class="c">司</i><i class="c">应</i><i class="c">收</i><i class="c">款</i><i class="c">月</i><i class="c">度</i><i class="c">同</i><i class="c">比</i></div><div class="rf" style="left:383px"><svg width="14" height="14" viewBox="0 0 14 14" style="position:absolute;left:0;top:0"><path d="M9.9 9.2 A3.7 3.6 0 0 0 6.0 3.5" fill="none" stroke="#1c1c1c" stroke-width="1.05"/><path d="M3.9 4.8 A3.7 3.6 0 0 0 7.8 10.5" fill="none" stroke="#1c1c1c" stroke-width="1.05"/><path d="M6.9 1.2 L5.2 3.3 L7.3 4.9" fill="none" stroke="#1c1c1c" stroke-width="1.0"/><path d="M6.9 12.8 L8.6 10.7 L6.5 9.1" fill="none" stroke="#1c1c1c" stroke-width="1.0"/></svg></div></div><svg class="abs" style="left:0;top:25px" width="401" height="225" viewBox="15 428 401 225"><defs>
<linearGradient id="c2wall" x1="0" y1="0" x2="1" y2="1"><stop offset="0" stop-color="#b3bbb0"/><stop offset="0.5" stop-color="#d3d7cf"/><stop offset="1" stop-color="#f1f3ef"/></linearGradient>
<linearGradient id="c2flr" x1="0" y1="0" x2="1" y2="0"><stop offset="0" stop-color="#99a592"/><stop offset="0.45" stop-color="#b9c1b3"/><stop offset="1" stop-color="#e2e5de"/></linearGradient>
<linearGradient id="c2flf" x1="0" y1="0" x2="0" y2="1"><stop offset="0" stop-color="#c9d0c4"/><stop offset="0.35" stop-color="#b4bdae"/><stop offset="1" stop-color="#7e8a76"/></linearGradient>
<linearGradient id="c2gf" x1="0" y1="0" x2="0" y2="1"><stop offset="0" stop-color="#fadc6e"/><stop offset="1" stop-color="#c6960c"/></linearGradient>
<linearGradient id="c2gs" x1="0" y1="0" x2="0" y2="1"><stop offset="0" stop-color="#c89a10"/><stop offset="1" stop-color="#664804"/></linearGradient>
<linearGradient id="c2gt" x1="0" y1="1" x2="1" y2="0"><stop offset="0" stop-color="#d29c08"/><stop offset="0.5" stop-color="#ecc244"/><stop offset="1" stop-color="#fdeaa4"/></linearGradient>
<linearGradient id="c2bf" x1="0" y1="0" x2="0" y2="1"><stop offset="0" stop-color="#d0e6fb"/><stop offset="1" stop-color="#86a4c2"/></linearGradient>
<linearGradient id="c2bs" x1="0" y1="0" x2="0" y2="1"><stop offset="0" stop-color="#8cacce"/><stop offset="1" stop-color="#42505f"/></linearGradient>
<linearGradient id="c2bt" x1="0" y1="1" x2="1" y2="0"><stop offset="0" stop-color="#a4c4e4"/><stop offset="1" stop-color="#d6eafc"/></linearGradient>
<filter id="c2blur" x="-50%" y="-50%" width="200%" height="200%"><feGaussianBlur stdDeviation="1.6"/></filter>
<filter id="c2blur2" x="-50%" y="-50%" width="200%" height="200%"><feGaussianBlur stdDeviation="1.2"/></filter>
</defs><text x="217" y="457" text-anchor="middle" font-family="Liberation Sans, sans-serif" font-size="12" font-weight="bold" fill="#3e4b30" textLength="130.5">应收款月度同比(已收)</text><rect x="88.4" y="470.6" width="259.0" height="79.0" fill="url(#c2wall)"/><path d="M88.4 486.4 H347.4" stroke="#a6bc96" stroke-width="1.1"/><path d="M88.4 502.2 H347.4" stroke="#a6bc96" stroke-width="1.1"/><path d="M88.4 518 H347.4" stroke="#a6bc96" stroke-width="1.1"/><path d="M88.4 533.8 H347.4" stroke="#a6bc96" stroke-width="1.1"/><polygon points="347.4,470.6 350.4,472.70000000000005 350.4,548.1 347.4,549.6" fill="#a2ab9b"/><polygon points="88.4,549.6 347.4,549.6 333.09999999999997,563.8000000000001 74.10000000000001,563.8000000000001" fill="url(#c2flr)"/><rect x="74.10000000000001" y="563.8000000000001" width="259.0" height="9.6" fill="url(#c2flf)"/><polygon points="333.09999999999997,563.8000000000001 347.4,549.6 347.4,559.2 333.09999999999997,573.4000000000001" fill="#7b8773"/><text x="83.5" y="475.90000000000003" text-anchor="end" font-family="Liberation Sans, sans-serif" font-size="12.6" fill="#4b5a3c" textLength="50.1" lengthAdjust="spacingAndGlyphs">400,000</text><text x="83.5" y="491.6" text-anchor="end" font-family="Liberation Sans, sans-serif" font-size="12.6" fill="#4b5a3c" textLength="50.1" lengthAdjust="spacingAndGlyphs">320,000</text><text x="83.5" y="507.40000000000003" text-anchor="end" font-family="Liberation Sans, sans-serif" font-size="12.6" fill="#4b5a3c" textLength="50.1" lengthAdjust="spacingAndGlyphs">240,000</text><text x="83.5" y="523.2" text-anchor="end" font-family="Liberation Sans, sans-serif" font-size="12.6" fill="#4b5a3c" textLength="50.1" lengthAdjust="spacingAndGlyphs">160,000</text><text x="83.5" y="538.8000000000001" text-anchor="end" font-family="Liberation Sans, sans-serif" font-size="12.6" fill="#4b5a3c" textLength="42.5" lengthAdjust="spacingAndGlyphs">80,000</text><text x="83.5" y="554.4" text-anchor="end" font-family="Liberation Sans, sans-serif" font-size="12.6" fill="#4b5a3c" textLength="7.6" lengthAdjust="spacingAndGlyphs">0</text><polygon points="115.5,549.9 129.3,535.1999999999999 137.0,535.1999999999999 137.0,550.1 122.7,563.8000000000001 " fill="#30362c" opacity="0.5" filter="url(#c2blur)"/><polygon points="119.7,550.9 133.5,537.1999999999999 133.5,550.1 119.7,563.8000000000001" fill="url(#c2gs)"/><rect x="112.5" y="550.9" width="7.2" height="12.900000000000091" fill="url(#c2gf)"/><polygon points="112.5,550.9 119.7,550.9 133.5,537.1999999999999 126.3,537.1999999999999" fill="url(#c2gt)"/><polygon points="189,495.8 202.5,481.0 210.1,481.0 210.1,550.0000000000001 196.1,563.8000000000001 " fill="#30362c" opacity="0.5" filter="url(#c2blur)"/><polygon points="193.1,496.8 206.6,483.0 206.6,550.0000000000001 193.1,563.8000000000001" fill="url(#c2bs)"/><rect x="186" y="496.8" width="7.1" height="67.00000000000006" fill="url(#c2bf)"/><polygon points="186,496.8 193.1,496.8 206.6,483.0 199.5,483.0" fill="url(#c2bt)"/><polygon points="209,555.4 222.5,540.6 230.1,540.6 230.1,550.0000000000001 216.1,563.8000000000001 " fill="#30362c" opacity="0.5" filter="url(#c2blur)"/><polygon points="213.1,556.4 226.6,542.6 226.6,550.0000000000001 213.1,563.8000000000001" fill="url(#c2bs)"/><rect x="206" y="556.4" width="7.1" height="7.400000000000091" fill="url(#c2bf)"/><polygon points="206,556.4 213.1,556.4 226.6,542.6 219.5,542.6" fill="url(#c2bt)"/><polygon points="217,509.8 230.9,494.6 238.4,494.6 238.4,549.6 224,563.8000000000001 " fill="#30362c" opacity="0.5" filter="url(#c2blur)"/><polygon points="221,510.8 234.9,496.6 234.9,549.6 221,563.8000000000001" fill="url(#c2gs)"/><rect x="214" y="510.8" width="7" height="53.00000000000006" fill="url(#c2gf)"/><polygon points="214,510.8 221,510.8 234.9,496.6 227.9,496.6" fill="url(#c2gt)"/><text x="90.2" y="591" text-anchor="middle" font-family="Liberation Sans, sans-serif" font-size="12.6" fill="#4b5a3c" textLength="15.3" lengthAdjust="spacingAndGlyphs">01</text><text x="110.57000000000001" y="591" text-anchor="middle" font-family="Liberation Sans, sans-serif" font-size="12.6" fill="#4b5a3c" textLength="15.3" lengthAdjust="spacingAndGlyphs">02</text><text x="130.94" y="591" text-anchor="middle" font-family="Liberation Sans, sans-serif" font-size="12.6" fill="#4b5a3c" textLength="15.3" lengthAdjust="spacingAndGlyphs">03</text><text x="151.31" y="591" text-anchor="middle" font-family="Liberation Sans, sans-serif" font-size="12.6" fill="#4b5a3c" textLength="15.3" lengthAdjust="spacingAndGlyphs">04</text><text x="171.68" y="591" text-anchor="middle" font-family="Liberation Sans, sans-serif" font-size="12.6" fill="#4b5a3c" textLength="15.3" lengthAdjust="spacingAndGlyphs">05</text><text x="192.05" y="591" text-anchor="middle" font-family="Liberation Sans, sans-serif" font-size="12.6" fill="#4b5a3c" textLength="15.3" lengthAdjust="spacingAndGlyphs">06</text><text x="212.42000000000002" y="591" text-anchor="middle" font-family="Liberation Sans, sans-serif" font-size="12.6" fill="#4b5a3c" textLength="15.3" lengthAdjust="spacingAndGlyphs">07</text><text x="232.79000000000002" y="591" text-anchor="middle" font-family="Liberation Sans, sans-serif" font-size="12.6" fill="#4b5a3c" textLength="15.3" lengthAdjust="spacingAndGlyphs">08</text><text x="253.16000000000003" y="591" text-anchor="middle" font-family="Liberation Sans, sans-serif" font-size="12.6" fill="#4b5a3c" textLength="15.3" lengthAdjust="spacingAndGlyphs">09</text><text x="273.53000000000003" y="591" text-anchor="middle" font-family="Liberation Sans, sans-serif" font-size="12.6" fill="#4b5a3c" textLength="15.3" lengthAdjust="spacingAndGlyphs">10</text><text x="293.90000000000003" y="591" text-anchor="middle" font-family="Liberation Sans, sans-serif" font-size="12.6" fill="#4b5a3c" textLength="15.3" lengthAdjust="spacingAndGlyphs">11</text><text x="314.27000000000004" y="591" text-anchor="middle" font-family="Liberation Sans, sans-serif" font-size="12.6" fill="#4b5a3c" textLength="15.3" lengthAdjust="spacingAndGlyphs">12</text><rect x="170.5" y="603.5" width="103" height="23" fill="#5a6450" opacity="0.6" filter="url(#c2blur2)"/><rect x="168.5" y="601.5" width="102" height="22" fill="#f0f2ec" stroke="#c6cbbd" stroke-width="1"/><rect x="174" y="611" width="6" height="6" fill="#a9d4f8"/><text x="183.2" y="617.2" font-family="Liberation Sans, sans-serif" font-size="12" fill="#4b5a3c" textLength="23.5">去年</text><rect x="231.6" y="611" width="6" height="6" fill="#f7b500"/><text x="241.2" y="617.2" font-family="Liberation Sans, sans-serif" font-size="12" fill="#4b5a3c" textLength="23.5">今年</text></svg></div><div class="panel" style="left:428px;top:402px"><div class="ph" style="width:385px"><div class="pt b"><i class="c">公</i><i class="c">司</i><i class="c">最</i><i class="c">近</i>6<i class="c">个</i><i class="c">月</i><i class="c">回</i><i class="c">款</i><i class="c">任</i><i class="c">务</i><i class="c">完</i><i class="c">成</i><i class="c">情</i><i class="c">况</i></div><div class="rf" style="left:367px"><svg width="14" height="14" viewBox="0 0 14 14" style="position:absolute;left:0;top:0"><path d="M9.9 9.2 A3.7 3.6 0 0 0 6.0 3.5" fill="none" stroke="#1c1c1c" stroke-width="1.05"/><path d="M3.9 4.8 A3.7 3.6 0 0 0 7.8 10.5" fill="none" stroke="#1c1c1c" stroke-width="1.05"/><path d="M6.9 1.2 L5.2 3.3 L7.3 4.9" fill="none" stroke="#1c1c1c" stroke-width="1.0"/><path d="M6.9 12.8 L8.6 10.7 L6.5 9.1" fill="none" stroke="#1c1c1c" stroke-width="1.0"/></svg></div></div><svg class="abs" style="left:0;top:25px" width="386" height="225" viewBox="429 428 386 225"><defs>
<linearGradient id="c3wall" x1="0" y1="0" x2="1" y2="1"><stop offset="0" stop-color="#b3bbb0"/><stop offset="0.5" stop-color="#d3d7cf"/><stop offset="1" stop-color="#f1f3ef"/></linearGradient>
<linearGradient id="c3flr" x1="0" y1="0" x2="1" y2="0"><stop offset="0" stop-color="#99a592"/><stop offset="0.45" stop-color="#b9c1b3"/><stop offset="1" stop-color="#e2e5de"/></linearGradient>
<linearGradient id="c3flf" x1="0" y1="0" x2="0" y2="1"><stop offset="0" stop-color="#c9d0c4"/><stop offset="0.35" stop-color="#b4bdae"/><stop offset="1" stop-color="#7e8a76"/></linearGradient>
<linearGradient id="c3gf" x1="0" y1="0" x2="0" y2="1"><stop offset="0" stop-color="#fadc6e"/><stop offset="1" stop-color="#c6960c"/></linearGradient>
<linearGradient id="c3gs" x1="0" y1="0" x2="0" y2="1"><stop offset="0" stop-color="#c89a10"/><stop offset="1" stop-color="#664804"/></linearGradient>
<linearGradient id="c3gt" x1="0" y1="1" x2="1" y2="0"><stop offset="0" stop-color="#d29c08"/><stop offset="0.5" stop-color="#ecc244"/><stop offset="1" stop-color="#fdeaa4"/></linearGradient>
<linearGradient id="c3bf" x1="0" y1="0" x2="0" y2="1"><stop offset="0" stop-color="#d0e6fb"/><stop offset="1" stop-color="#86a4c2"/></linearGradient>
<linearGradient id="c3bs" x1="0" y1="0" x2="0" y2="1"><stop offset="0" stop-color="#8cacce"/><stop offset="1" stop-color="#42505f"/></linearGradient>
<linearGradient id="c3bt" x1="0" y1="1" x2="1" y2="0"><stop offset="0" stop-color="#a4c4e4"/><stop offset="1" stop-color="#d6eafc"/></linearGradient>
<filter id="c3blur" x="-50%" y="-50%" width="200%" height="200%"><feGaussianBlur stdDeviation="1.6"/></filter>
<filter id="c3blur2" x="-50%" y="-50%" width="200%" height="200%"><feGaussianBlur stdDeviation="1.2"/></filter>
</defs><text x="630.5" y="457" text-anchor="middle" font-family="Liberation Sans, sans-serif" font-size="12" font-weight="bold" fill="#3e4b30" textLength="142">回款任务完成情况统计图</text><rect x="502.4" y="470.8" width="259.6" height="74.69999999999999" fill="url(#c3wall)"/><path d="M502.4 485.7 H762" stroke="#a6bc96" stroke-width="1.1"/><path d="M502.4 500.6 H762" stroke="#a6bc96" stroke-width="1.1"/><path d="M502.4 515.6 H762" stroke="#a6bc96" stroke-width="1.1"/><path d="M502.4 530.5 H762" stroke="#a6bc96" stroke-width="1.1"/><polygon points="762,470.8 764.6,472.62 764.6,544.2 762,545.5" fill="#a2ab9b"/><polygon points="502.4,545.5 762,545.5 747.7,559.8 488.09999999999997,559.8" fill="url(#c3flr)"/><rect x="488.09999999999997" y="559.8" width="259.6" height="9.9" fill="url(#c3flf)"/><polygon points="747.7,559.8 762,545.5 762,555.4 747.7,569.6999999999999" fill="#7b8773"/><text x="497.8" y="476.1" text-anchor="end" font-family="Liberation Sans, sans-serif" font-size="12.6" fill="#4b5a3c" textLength="50.1" lengthAdjust="spacingAndGlyphs">300,000</text><text x="497.8" y="490.5" text-anchor="end" font-family="Liberation Sans, sans-serif" font-size="12.6" fill="#4b5a3c" textLength="50.1" lengthAdjust="spacingAndGlyphs">240,000</text><text x="497.8" y="505.20000000000005" text-anchor="end" font-family="Liberation Sans, sans-serif" font-size="12.6" fill="#4b5a3c" textLength="50.1" lengthAdjust="spacingAndGlyphs">180,000</text><text x="497.8" y="520.1" text-anchor="end" font-family="Liberation Sans, sans-serif" font-size="12.6" fill="#4b5a3c" textLength="50.1" lengthAdjust="spacingAndGlyphs">120,000</text><text x="497.8" y="535.1" text-anchor="end" font-family="Liberation Sans, sans-serif" font-size="12.6" fill="#4b5a3c" textLength="42.5" lengthAdjust="spacingAndGlyphs">60,000</text><text x="497.8" y="550.1" text-anchor="end" font-family="Liberation Sans, sans-serif" font-size="12.6" fill="#4b5a3c" textLength="7.6" lengthAdjust="spacingAndGlyphs">0</text><polygon points="517.8,542.2 531.5999999999999,527.2 546.3,527.2 546.3,545.8 532.0,559.8 " fill="#30362c" opacity="0.5" filter="url(#c3blur)"/><polygon points="529.0,543.2 542.8,529.2 542.8,545.8 529.0,559.8" fill="url(#c3gs)"/><rect x="514.8" y="543.2" width="14.2" height="16.59999999999991" fill="url(#c3gf)"/><polygon points="514.8,543.2 529.0,543.2 542.8,529.2 528.5999999999999,529.2" fill="url(#c3gt)"/><polygon points="571.1999999999999,542.3 585.4,542.3 582.4,546.8 568.1999999999999,546.8" fill="#30362c" opacity="0.55" filter="url(#c3blur)"/><polygon points="556.4,559.8 570.6,559.8 584.4,545.8 570.1999999999999,545.8" fill="url(#c3gt)"/><polygon points="612.8,542.3 627.0,542.3 624.0,546.8 609.8,546.8" fill="#30362c" opacity="0.55" filter="url(#c3blur)"/><polygon points="598.0,559.8 612.2,559.8 626.0,545.8 611.8,545.8" fill="url(#c3gt)"/><polygon points="654.3999999999999,542.3 668.5999999999999,542.3 665.5999999999999,546.8 651.3999999999999,546.8" fill="#30362c" opacity="0.55" filter="url(#c3blur)"/><polygon points="639.5999999999999,559.8 653.8,559.8 667.5999999999999,545.8 653.3999999999999,545.8" fill="url(#c3gt)"/><polygon points="695.9999999999999,542.3 710.1999999999999,542.3 707.1999999999999,546.8 692.9999999999999,546.8" fill="#30362c" opacity="0.55" filter="url(#c3blur)"/><polygon points="681.1999999999999,559.8 695.4,559.8 709.1999999999999,545.8 694.9999999999999,545.8" fill="url(#c3gt)"/><polygon points="725.8,491.2 739.5999999999999,476.2 754.3,476.2 754.3,545.8 740.0,559.8 " fill="#30362c" opacity="0.5" filter="url(#c3blur)"/><polygon points="737.0,492.2 750.8,478.2 750.8,545.8 737.0,559.8" fill="url(#c3gs)"/><rect x="722.8" y="492.2" width="14.2" height="67.59999999999997" fill="url(#c3gf)"/><polygon points="722.8,492.2 737.0,492.2 750.8,478.2 736.5999999999999,478.2" fill="url(#c3gt)"/><text x="513.2" y="587.5" text-anchor="middle" font-family="Liberation Sans, sans-serif" font-size="12.6" fill="#4b5a3c" textLength="30.5" lengthAdjust="spacingAndGlyphs">2013</text><text x="513.2" y="601.2" text-anchor="middle" font-family="Liberation Sans, sans-serif" font-size="12.6" fill="#4b5a3c" textLength="20.7" lengthAdjust="spacingAndGlyphs">-02</text><text x="554.6" y="587.5" text-anchor="middle" font-family="Liberation Sans, sans-serif" font-size="12.6" fill="#4b5a3c" textLength="30.5" lengthAdjust="spacingAndGlyphs">2013</text><text x="554.6" y="601.2" text-anchor="middle" font-family="Liberation Sans, sans-serif" font-size="12.6" fill="#4b5a3c" textLength="20.7" lengthAdjust="spacingAndGlyphs">-03</text><text x="596.0" y="587.5" text-anchor="middle" font-family="Liberation Sans, sans-serif" font-size="12.6" fill="#4b5a3c" textLength="30.5" lengthAdjust="spacingAndGlyphs">2013</text><text x="596.0" y="601.2" text-anchor="middle" font-family="Liberation Sans, sans-serif" font-size="12.6" fill="#4b5a3c" textLength="20.7" lengthAdjust="spacingAndGlyphs">-04</text><text x="637.4000000000001" y="587.5" text-anchor="middle" font-family="Liberation Sans, sans-serif" font-size="12.6" fill="#4b5a3c" textLength="30.5" lengthAdjust="spacingAndGlyphs">2013</text><text x="637.4000000000001" y="601.2" text-anchor="middle" font-family="Liberation Sans, sans-serif" font-size="12.6" fill="#4b5a3c" textLength="20.7" lengthAdjust="spacingAndGlyphs">-05</text><text x="678.8000000000001" y="587.5" text-anchor="middle" font-family="Liberation Sans, sans-serif" font-size="12.6" fill="#4b5a3c" textLength="30.5" lengthAdjust="spacingAndGlyphs">2013</text><text x="678.8000000000001" y="601.2" text-anchor="middle" font-family="Liberation Sans, sans-serif" font-size="12.6" fill="#4b5a3c" textLength="20.7" lengthAdjust="spacingAndGlyphs">-06</text><text x="720.2" y="587.5" text-anchor="middle" font-family="Liberation Sans, sans-serif" font-size="12.6" fill="#4b5a3c" textLength="30.5" lengthAdjust="spacingAndGlyphs">2013</text><text x="720.2" y="601.2" text-anchor="middle" font-family="Liberation Sans, sans-serif" font-size="12.6" fill="#4b5a3c" textLength="20.7" lengthAdjust="spacingAndGlyphs">-07</text><rect x="585.0" y="613.5" width="103.5" height="23" fill="#5a6450" opacity="0.6" filter="url(#c3blur2)"/><rect x="583.0" y="611.5" width="102.5" height="22" fill="#f0f2ec" stroke="#c6cbbd" stroke-width="1"/><rect x="588.5" y="621" width="6" height="6" fill="#a9d4f8"/><text x="598" y="627.2" font-family="Liberation Sans, sans-serif" font-size="12" fill="#4b5a3c" textLength="23.5">目标</text><rect x="645.6" y="621" width="6" height="6" fill="#f7b500"/><text x="654.5" y="627.2" font-family="Liberation Sans, sans-serif" font-size="12" fill="#4b5a3c" textLength="23.5">完成</text></svg><div class="sb" style="left:386px"><div class="sbb" style="top:0;height:16px"><div class="tri-u"></div></div><div class="sbb" style="top:16px;height:214px"></div><div class="sbb" style="top:234px;height:16px"><div class="tri-d" style="top:5px"></div></div></div></div><div class="panel" style="left:842px;top:402px"><div class="ph" style="width:401px"><div class="pt b"><i class="c">日</i><span style="font-weight:normal;letter-spacing:0">/</span><i class="c">周</i><span style="font-weight:normal;letter-spacing:0">/</span><i class="c">月</i><i class="c">报</i></div><div class="rf" style="left:383px"><svg width="14" height="14" viewBox="0 0 14 14" style="position:absolute;left:0;top:0"><path d="M9.9 9.2 A3.7 3.6 0 0 0 6.0 3.5" fill="none" stroke="#1c1c1c" stroke-width="1.05"/><path d="M3.9 4.8 A3.7 3.6 0 0 0 7.8 10.5" fill="none" stroke="#1c1c1c" stroke-width="1.05"/><path d="M6.9 1.2 L5.2 3.3 L7.3 4.9" fill="none" stroke="#1c1c1c" stroke-width="1.0"/><path d="M6.9 12.8 L8.6 10.7 L6.5 9.1" fill="none" stroke="#1c1c1c" stroke-width="1.0"/></svg></div></div><div style="position:absolute;left:0;top:25px;width:401px;height:123px;border:1px solid #000;border-top:1px solid #303030"><div style="position:absolute;left:0px;top:0;width:99px;height:21px;background:#003300;color:#fff;text-align:left;line-height:21px;padding-left:3px;"><i class="c">日</i>/<i class="c">周</i>/<i class="c">月</i><i class="c">报</i></div><div style="position:absolute;left:99px;top:0;width:101px;height:21px;background:#336600;color:#fff;text-align:center;line-height:21px;border-left:1px solid #808080;"><i class="c">日</i></div><div style="position:absolute;left:199px;top:0;width:101px;height:21px;background:#336600;color:#fff;text-align:center;line-height:21px;border-left:1px solid #808080;"><i class="c">周</i></div><div style="position:absolute;left:299px;top:0;width:100px;height:21px;background:#336600;color:#fff;text-align:center;line-height:21px;border-left:1px solid #808080;"><i class="c">月</i></div><div style="position:absolute;left:0;top:21px;width:399px;height:25px;border-top:1px solid #808080"></div><div style="position:absolute;left:0;top:22px;width:99px;height:24px;background:#edf5fe"></div><div style="position:absolute;right:303px;top:22px;height:24px;line-height:25px;white-space:nowrap"><i class="c">写</i><span style="display:inline-block;width:16px;height:16px;vertical-align:-3px;margin:0 0 0 2px"><svg width="16" height="16" viewBox="0 0 16 16"><rect x="0.5" y="1" width="13" height="14" rx="1" fill="#f8f8f4" stroke="#c8c8c0"/><rect x="1.5" y="2" width="11" height="12" fill="#f2f2ec"/><g transform="translate(1.5,1) scale(0.88)"><path d="M2.2 13.8 L3.4 10 L11.6 1.8 C12.3 1.1 13.3 1.1 14 1.8 L14.4 2.2 C15.1 2.9 15.1 3.9 14.4 4.6 L6.2 12.8 Z" fill="#f6c83c" stroke="#b07818" stroke-width="0.9" stroke-linejoin="round"/><path d="M4.6 10.4 L12.2 2.8 M6 11.8 L13.6 4.2" stroke="#fbe48a" stroke-width="0.9"/><path d="M2.2 13.8 L3.4 10 L6.2 12.8 Z" fill="#f0c090" stroke="#a06820" stroke-width="0.7" stroke-linejoin="round"/><path d="M2.2 13.8 L2.7 12.2 L3.8 13.3 Z" fill="#3a2a1a"/><path d="M11.2 2.6 L13.6 5" stroke="#d8a0a0" stroke-width="1.3"/></g></svg></span>:</div><div style="position:absolute;left:99px;top:21px;width:1px;height:25px;background:#808080"></div><div style="position:absolute;left:141.5px;top:25.5px;width:17px;height:17px"><svg width="17" height="17" viewBox="0 0 16 16"><g transform="translate(0,0) scale(1)"><path d="M2.2 13.8 L3.4 10 L11.6 1.8 C12.3 1.1 13.3 1.1 14 1.8 L14.4 2.2 C15.1 2.9 15.1 3.9 14.4 4.6 L6.2 12.8 Z" fill="#f6c83c" stroke="#b07818" stroke-width="0.9" stroke-linejoin="round"/><path d="M4.6 10.4 L12.2 2.8 M6 11.8 L13.6 4.2" stroke="#fbe48a" stroke-width="0.9"/><path d="M2.2 13.8 L3.4 10 L6.2 12.8 Z" fill="#f0c090" stroke="#a06820" stroke-width="0.7" stroke-linejoin="round"/><path d="M2.2 13.8 L2.7 12.2 L3.8 13.3 Z" fill="#3a2a1a"/><path d="M11.2 2.6 L13.6 5" stroke="#d8a0a0" stroke-width="1.3"/></g></svg></div><div style="position:absolute;left:199px;top:21px;width:1px;height:25px;background:#808080"></div><div style="position:absolute;left:241.5px;top:25.5px;width:17px;height:17px"><svg width="17" height="17" viewBox="0 0 16 16"><g transform="translate(0,0) scale(1)"><path d="M2.2 13.8 L3.4 10 L11.6 1.8 C12.3 1.1 13.3 1.1 14 1.8 L14.4 2.2 C15.1 2.9 15.1 3.9 14.4 4.6 L6.2 12.8 Z" fill="#f6c83c" stroke="#b07818" stroke-width="0.9" stroke-linejoin="round"/><path d="M4.6 10.4 L12.2 2.8 M6 11.8 L13.6 4.2" stroke="#fbe48a" stroke-width="0.9"/><path d="M2.2 13.8 L3.4 10 L6.2 12.8 Z" fill="#f0c090" stroke="#a06820" stroke-width="0.7" stroke-linejoin="round"/><path d="M2.2 13.8 L2.7 12.2 L3.8 13.3 Z" fill="#3a2a1a"/><path d="M11.2 2.6 L13.6 5" stroke="#d8a0a0" stroke-width="1.3"/></g></svg></div><div style="position:absolute;left:299px;top:21px;width:1px;height:25px;background:#808080"></div><div style="position:absolute;left:341.5px;top:25.5px;width:17px;height:17px"><svg width="17" height="17" viewBox="0 0 16 16"><g transform="translate(0,0) scale(1)"><path d="M2.2 13.8 L3.4 10 L11.6 1.8 C12.3 1.1 13.3 1.1 14 1.8 L14.4 2.2 C15.1 2.9 15.1 3.9 14.4 4.6 L6.2 12.8 Z" fill="#f6c83c" stroke="#b07818" stroke-width="0.9" stroke-linejoin="round"/><path d="M4.6 10.4 L12.2 2.8 M6 11.8 L13.6 4.2" stroke="#fbe48a" stroke-width="0.9"/><path d="M2.2 13.8 L3.4 10 L6.2 12.8 Z" fill="#f0c090" stroke="#a06820" stroke-width="0.7" stroke-linejoin="round"/><path d="M2.2 13.8 L2.7 12.2 L3.8 13.3 Z" fill="#3a2a1a"/><path d="M11.2 2.6 L13.6 5" stroke="#d8a0a0" stroke-width="1.3"/></g></svg></div><div style="position:absolute;left:0;top:46px;width:399px;height:25px;border-top:1px solid #808080"></div><div style="position:absolute;left:0;top:47px;width:99px;height:24px;background:#edf5fe"></div><div style="position:absolute;right:303px;top:47px;height:24px;line-height:25px;white-space:nowrap"><i class="c">看</i><i class="c">下</i><i class="c">级</i><span style="display:inline-block;width:16px;height:16px;vertical-align:-3px;margin:0 0 0 2px"><svg width="16" height="16" viewBox="0 -1.5 16 16" style="overflow:visible"><path d="M2.5 1.5 H11.5 C12.6 1.5 13.5 2.4 13.5 3.5 V7.5 C13.5 8.6 12.6 9.5 11.5 9.5 H6.5 L4 12 V9.5 H2.5 C1.4 9.5 0.5 8.6 0.5 7.5 V3.5 C0.5 2.4 1.4 1.5 2.5 1.5 Z" fill="#d8ecfc" stroke="#6c9cd0" stroke-width="1"/><circle cx="11.8" cy="11.8" r="3.8" fill="#58a838" stroke="#3c7c24" stroke-width="0.7"/><path d="M11.8 9.6 V14 M9.6 11.8 H14" stroke="#fff" stroke-width="1.5"/></svg></span>:</div><div style="position:absolute;left:99px;top:46px;width:1px;height:25px;background:#808080"></div><div class="lk" style="position:absolute;left:100px;top:47px;width:99px;height:24px;line-height:24px;text-align:center"><i class="c">查</i><i class="c">看</i></div><div style="position:absolute;left:199px;top:46px;width:1px;height:25px;background:#808080"></div><div class="lk" style="position:absolute;left:200px;top:47px;width:99px;height:24px;line-height:24px;text-align:center"><i class="c">查</i><i class="c">看</i></div><div style="position:absolute;left:299px;top:46px;width:1px;height:25px;background:#808080"></div><div class="lk" style="position:absolute;left:300px;top:47px;width:99px;height:24px;line-height:24px;text-align:center"><i class="c">查</i><i class="c">看</i></div><div style="position:absolute;left:0;top:71px;width:399px;height:25px;border-top:1px solid #808080"></div><div style="position:absolute;left:0;top:72px;width:99px;height:24px;background:#edf5fe"></div><div style="position:absolute;right:303px;top:72px;height:24px;line-height:25px;white-space:nowrap"><i class="c">提</i><i class="c">交</i><i class="c">情</i><i class="c">况</i><span style="display:inline-block;width:16px;height:16px;vertical-align:-3px;margin:0 0 0 2px"><svg width="16" height="16" viewBox="0 0 16 16"><rect x="0.5" y="1.5" width="14" height="13" fill="#f4f4f4" stroke="#9aa8b8"/><rect x="1" y="2" width="13" height="3.2" fill="#5c98e0"/><path d="M2.5 7 H6 V9.5 H2.5 Z M2.5 10.5 H6 V13 H2.5 Z M7 10.5 H10.5 V13 H7 Z" fill="#d8d8d8" stroke="#a8a8a8" stroke-width="0.6"/><path d="M6.2 9 L9 11.8 L15 4.8" fill="none" stroke="#2c9c2c" stroke-width="2.4" stroke-linejoin="round"/><path d="M6.2 9 L9 11.8 L15 4.8" fill="none" stroke="#7cd85c" stroke-width="0.9" stroke-linejoin="round"/></svg></span>:</div><div style="position:absolute;left:99px;top:71px;width:1px;height:25px;background:#808080"></div><div style="position:absolute;left:145px;top:78px;width:11px;height:11px"><svg width="11" height="11" viewBox="0 0 11 11"><rect x="0.75" y="0.75" width="9.5" height="9.5" fill="#fbfaf8" stroke="#a29584" stroke-width="1.5"/><path d="M2.5 3.5 H8.5 M2.5 5.5 H8.5 M2.5 7.5 H8.5" stroke="#8c8478" stroke-width="1"/></svg></div><div style="position:absolute;left:199px;top:71px;width:1px;height:25px;background:#808080"></div><div style="position:absolute;left:245px;top:78px;width:11px;height:11px"><svg width="11" height="11" viewBox="0 0 11 11"><rect x="0.75" y="0.75" width="9.5" height="9.5" fill="#fbfaf8" stroke="#a29584" stroke-width="1.5"/><path d="M2.5 3.5 H8.5 M2.5 5.5 H8.5 M2.5 7.5 H8.5" stroke="#8c8478" stroke-width="1"/></svg></div><div style="position:absolute;left:299px;top:71px;width:1px;height:25px;background:#808080"></div><div style="position:absolute;left:345px;top:78px;width:11px;height:11px"><svg width="11" height="11" viewBox="0 0 11 11"><rect x="0.75" y="0.75" width="9.5" height="9.5" fill="#fbfaf8" stroke="#a29584" stroke-width="1.5"/><path d="M2.5 3.5 H8.5 M2.5 5.5 H8.5 M2.5 7.5 H8.5" stroke="#8c8478" stroke-width="1"/></svg></div><div style="position:absolute;left:0;top:96px;width:399px;height:25px;border-top:1px solid #808080"></div><div style="position:absolute;left:0;top:97px;width:99px;height:24px;background:#edf5fe"></div><div style="position:absolute;right:303px;top:97px;height:24px;line-height:25px;white-space:nowrap"><i class="c">汇</i><i class="c">总</i><span style="display:inline-block;width:16px;height:16px;vertical-align:-3px;margin:0 0 0 2px"><svg width="16" height="16" viewBox="0 0 16 16"><rect x="1.5" y="2.5" width="2" height="11" fill="#e0e0e0" stroke="#b8b8b8" stroke-width="0.8"/><path d="M6 3.5 H14.5 M6 6 H12.5 M6 8.5 H14.5 M6 11 H12.5 M6 13.5 H14.5" stroke="#505050" stroke-width="1.1"/></svg></span>:</div><div style="position:absolute;left:99px;top:96px;width:1px;height:25px;background:#808080"></div><div style="position:absolute;left:145px;top:103px;width:11px;height:11px"><svg width="11" height="11" viewBox="0 0 11 11"><rect x="0.75" y="0.75" width="9.5" height="9.5" fill="#fbfaf8" stroke="#a29584" stroke-width="1.5"/><path d="M2.5 3.5 H8.5 M2.5 5.5 H8.5 M2.5 7.5 H8.5" stroke="#8c8478" stroke-width="1"/></svg></div><div style="position:absolute;left:199px;top:96px;width:1px;height:25px;background:#808080"></div><div style="position:absolute;left:245px;top:103px;width:11px;height:11px"><svg width="11" height="11" viewBox="0 0 11 11"><rect x="0.75" y="0.75" width="9.5" height="9.5" fill="#fbfaf8" stroke="#a29584" stroke-width="1.5"/><path d="M2.5 3.5 H8.5 M2.5 5.5 H8.5 M2.5 7.5 H8.5" stroke="#8c8478" stroke-width="1"/></svg></div><div style="position:absolute;left:299px;top:96px;width:1px;height:25px;background:#808080"></div><div style="position:absolute;left:345px;top:103px;width:11px;height:11px"><svg width="11" height="11" viewBox="0 0 11 11"><rect x="0.75" y="0.75" width="9.5" height="9.5" fill="#fbfaf8" stroke="#a29584" stroke-width="1.5"/><path d="M2.5 3.5 H8.5 M2.5 5.5 H8.5 M2.5 7.5 H8.5" stroke="#8c8478" stroke-width="1"/></svg></div></div></div></body></html>
